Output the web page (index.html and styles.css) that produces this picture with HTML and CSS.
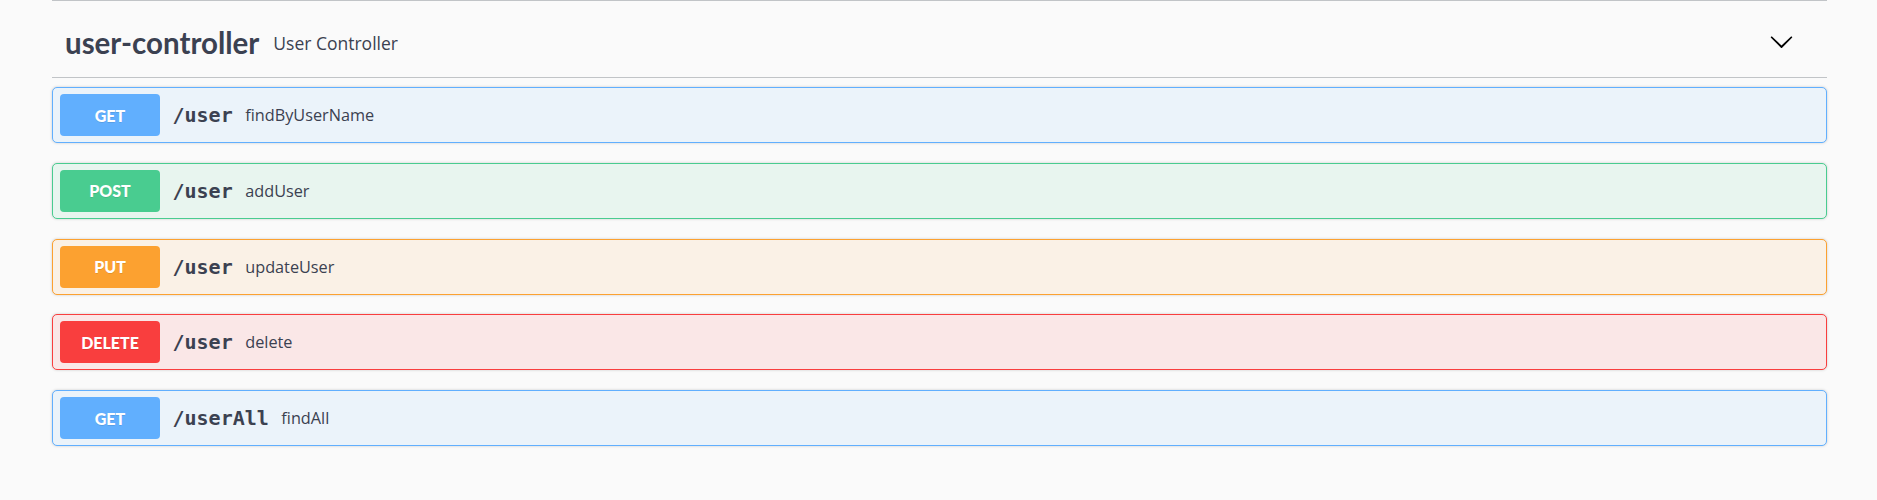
FILE: index.html
```html
<!DOCTYPE html>
<html>
<head>
<meta charset="utf-8">
<link rel="stylesheet" href="styles.css">
</head>
<body>
<div class="wrapper">
  <section class="tag-section">
    <h4 class="tag-heading">
      <span class="tag-name">user-controller</span>
      <small class="tag-desc">User Controller</small>
      <span class="spacer"></span>
      <svg class="arrow" width="25" height="25" viewBox="0 0 20 20"><path d="M17.418 6.109c.272-.268.709-.268.979 0s.271.701 0 .969l-7.908 7.83c-.27.268-.707.268-.979 0l-7.908-7.83c-.27-.268-.27-.701 0-.969.271-.268.709-.268.979 0L10 13.25l7.418-7.141z"/></svg>
    </h4>
    <div class="ops">
      <div class="op op-get">
        <span class="method">GET</span>
        <span class="path">/user</span>
        <span class="desc">findByUserName</span>
      </div>
      <div class="op op-post">
        <span class="method">POST</span>
        <span class="path">/user</span>
        <span class="desc">addUser</span>
      </div>
      <div class="op op-put">
        <span class="method">PUT</span>
        <span class="path">/user</span>
        <span class="desc">updateUser</span>
      </div>
      <div class="op op-delete">
        <span class="method">DELETE</span>
        <span class="path">/user</span>
        <span class="desc">delete</span>
      </div>
      <div class="op op-get">
        <span class="method">GET</span>
        <span class="path">/userAll</span>
        <span class="desc">findAll</span>
      </div>
    </div>
  </section>
</div>
</body>
</html>
```

FILE: styles.css
```css
html, body {
  margin: 0;
  padding: 0;
  background: #fafafa;
}
.wrapper {
  margin: 0 50px 0 52px;
}
.tag-section {
  border-top: 1px solid #c1c4c7;
}
.tag-heading {
  display: flex;
  align-items: flex-start;
  margin: 0 0 9px 0;
  height: 77px;
  box-sizing: border-box;
  padding: 24px 0 0 13px;
  border-bottom: 1px solid #c1c4c7;
  color: #3b4151;
}
.tag-name {
  font-family: Lato, "Open Sans", sans-serif;
  font-weight: 700;
  font-size: 29.5px;
  line-height: 36px;
}
.tag-desc {
  font-family: "Open Sans", sans-serif;
  font-weight: 400;
  font-size: 17.5px;
  line-height: 24px;
  margin-top: 6px;
  padding-left: 14px;
}
.spacer { flex: 1; }
.arrow {
  margin-top: 4px;
  margin-right: 33px;
  fill: #000;
}
.op {
  display: flex;
  align-items: center;
  height: 56px;
  box-sizing: border-box;
  border: 1px solid;
  border-radius: 5px;
  padding: 0 7px;
  margin-bottom: 19.75px;
  box-shadow: 0 0 3px rgba(0,0,0,.19);
  color: #3b4151;
}
.method {
  width: 100px;
  height: 42px;
  border-radius: 4px;
  display: flex;
  align-items: center;
  justify-content: center;
  font-family: Lato, "Open Sans", sans-serif;
  font-weight: 900;
  font-size: 16px;
  color: #fff;
  text-shadow: 0 1px 0 rgba(0,0,0,.1);
}
.path {
  font-family: "DejaVu Sans Mono", monospace;
  font-weight: 700;
  font-size: 20px;
  padding: 0 12.5px;
}
.desc {
  font-family: "Open Sans", sans-serif;
  font-size: 16.25px;
}
.op-get { background: #ebf3fa; border-color: #61affe; }
.op-get .method { background: #61affe; }
.op-post { background: #e8f5ef; border-color: #49cc90; }
.op-post .method { background: #49cc90; }
.op-put { background: #faf1e6; border-color: #fca130; }
.op-put .method { background: #fca130; }
.op-delete { background: #fae7e7; border-color: #f93e3e; }
.op-delete .method { background: #f93e3e; }
```
